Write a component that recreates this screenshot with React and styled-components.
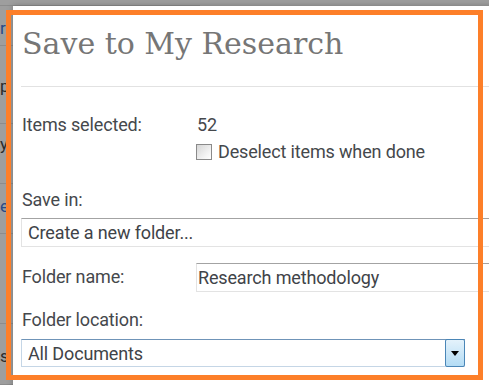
import React from "react";
import styled, { createGlobalStyle } from "styled-components";

const Global = createGlobalStyle`
  html, body { margin: 0; padding: 0; }
  body {
    background: #9e9e9e;
    overflow: hidden;
    font-family: Roboto, "Liberation Sans", sans-serif;
  }
`;

const Stage = styled.div`
  position: relative;
  width: 489px;
  height: 385px;
  overflow: hidden;
  background: #9e9e9e;
`;

const BackList = styled.div`
  display: flex;
  flex-direction: column;
  width: 200px;
`;

const BackRow = styled.div`
  height: ${(p) => p.$h}px;
  border-bottom: 1px solid #8c8c8c;
  box-sizing: border-box;
  padding-top: ${(p) => p.$pt}px;
  font-size: 17px;
  line-height: 20px;
  color: ${(p) => (p.$link ? "#2a4a86" : "#2c2c2c")};
  white-space: nowrap;
`;

const Dialog = styled.div`
  position: absolute;
  left: 13px;
  top: 6px;
  width: 620px;
  height: 480px;
  background: #fff;
  padding: 0 8px;
  box-sizing: border-box;
  box-shadow: 0 0 6px rgba(0, 0, 0, 0.25);
`;

const Header = styled.div`
  height: 81px;
  border-bottom: 1px solid #e2e2e2;
  box-sizing: border-box;
  padding-top: 18px;
`;

const Title = styled.h1`
  margin: 0;
  font-family: "DejaVu Serif", "Liberation Serif", serif;
  font-weight: normal;
  font-size: 30px;
  line-height: 40px;
  color: #767676;
  padding-left: 1px;
`;

const Body = styled.div`
  padding-top: 27px;
  display: flex;
  flex-direction: column;
  font-size: 18px;
  letter-spacing: -0.15px;
  line-height: 21px;
  color: #45484c;
`;

const Row = styled.div`
  display: grid;
  grid-template-columns: 175px 1fr;
  align-items: start;
  margin-top: ${(p) => p.$mt || 0}px;
`;

const Label = styled.div`
  padding-left: 1px;
  margin-top: ${(p) => p.$mt || 0}px;
`;

const Value = styled.div`
  padding-left: 1px;
`;

const CheckRow = styled.label`
  display: flex;
  align-items: center;
  gap: 6px;
`;

const Box = styled.span`
  width: 14px;
  height: 14px;
  border: 1px solid #8a8a8a;
  background: linear-gradient(135deg, #d6d6d6 0%, #f4f4f4 70%, #ffffff 100%);
  display: inline-block;
  flex: none;
`;

const TextBox = styled.div`
  height: 29px;
  box-sizing: border-box;
  border: 1px solid #e3e3e3;
  border-top-color: #a3a3a3;
  padding: 3px 6px 0;
  margin-top: ${(p) => p.$mt || 0}px;
  color: #404348;
  white-space: nowrap;
  overflow: hidden;
`;

const FieldBox = styled(TextBox)`
  padding-left: 1px;
`;

const Select = styled.div`
  margin-top: 9px;
  width: 444px;
  height: 28px;
  box-sizing: border-box;
  border: 1px solid #c5d6e6;
  border-top-color: #6f94b8;
  border-right: none;
  display: flex;
  align-items: stretch;
  color: #404348;
`;

const SelectText = styled.div`
  flex: 1;
  padding: 3px 6px 0;
`;

const SelectBtn = styled.div`
  width: 20px;
  box-sizing: border-box;
  border: 1px solid #4a86b7;
  border-radius: 2px;
  margin-top: -1px;
  margin-bottom: -1px;
  background: linear-gradient(#e4f2fb, #b3dcf5);
  display: flex;
  align-items: center;
  justify-content: center;
`;

const Highlight = styled.div`
  position: absolute;
  left: 6px;
  top: 10px;
  width: 477px;
  height: 370px;
  box-sizing: border-box;
  border: 5px solid #fd7f29;
  pointer-events: none;
`;

export default function App() {
  return (
    <>
      <Global />
      <Stage>
        <BackList>
          <BackRow $h={6} $pt={0} />
          <BackRow $h={40} $pt={12} $link>
            r
          </BackRow>
          <BackRow $h={78} $pt={30}>
            p
          </BackRow>
          <BackRow $h={60} $pt={10}>
            y
          </BackRow>
          <BackRow $h={50} $pt={12} $link>
            e
          </BackRow>
          <BackRow $h={90} $pt={0} />
          <BackRow $h={61} $pt={22}>
            s
          </BackRow>
        </BackList>
        <Dialog>
          <Header>
            <Title>Save to My Research</Title>
          </Header>
          <Body>
            <Row>
              <Label>Items selected:</Label>
              <Value>52</Value>
            </Row>
            <Row $mt={6}>
              <span />
              <CheckRow>
                <Box />
                Deselect items when done
              </CheckRow>
            </Row>
            <Label $mt={27}>Save in:</Label>
            <TextBox $mt={8}>Create a new folder...</TextBox>
            <Row $mt={16}>
              <Label $mt={3}>Folder name:</Label>
              <FieldBox>Research methodology</FieldBox>
            </Row>
            <Label $mt={17}>Folder location:</Label>
            <Select>
              <SelectText>All Documents</SelectText>
              <SelectBtn>
                <svg width="8" height="5" viewBox="0 0 8 5">
                  <path d="M0 0h8L4 5z" fill="#000" />
                </svg>
              </SelectBtn>
            </Select>
          </Body>
        </Dialog>
        <Highlight />
      </Stage>
    </>
  );
}
